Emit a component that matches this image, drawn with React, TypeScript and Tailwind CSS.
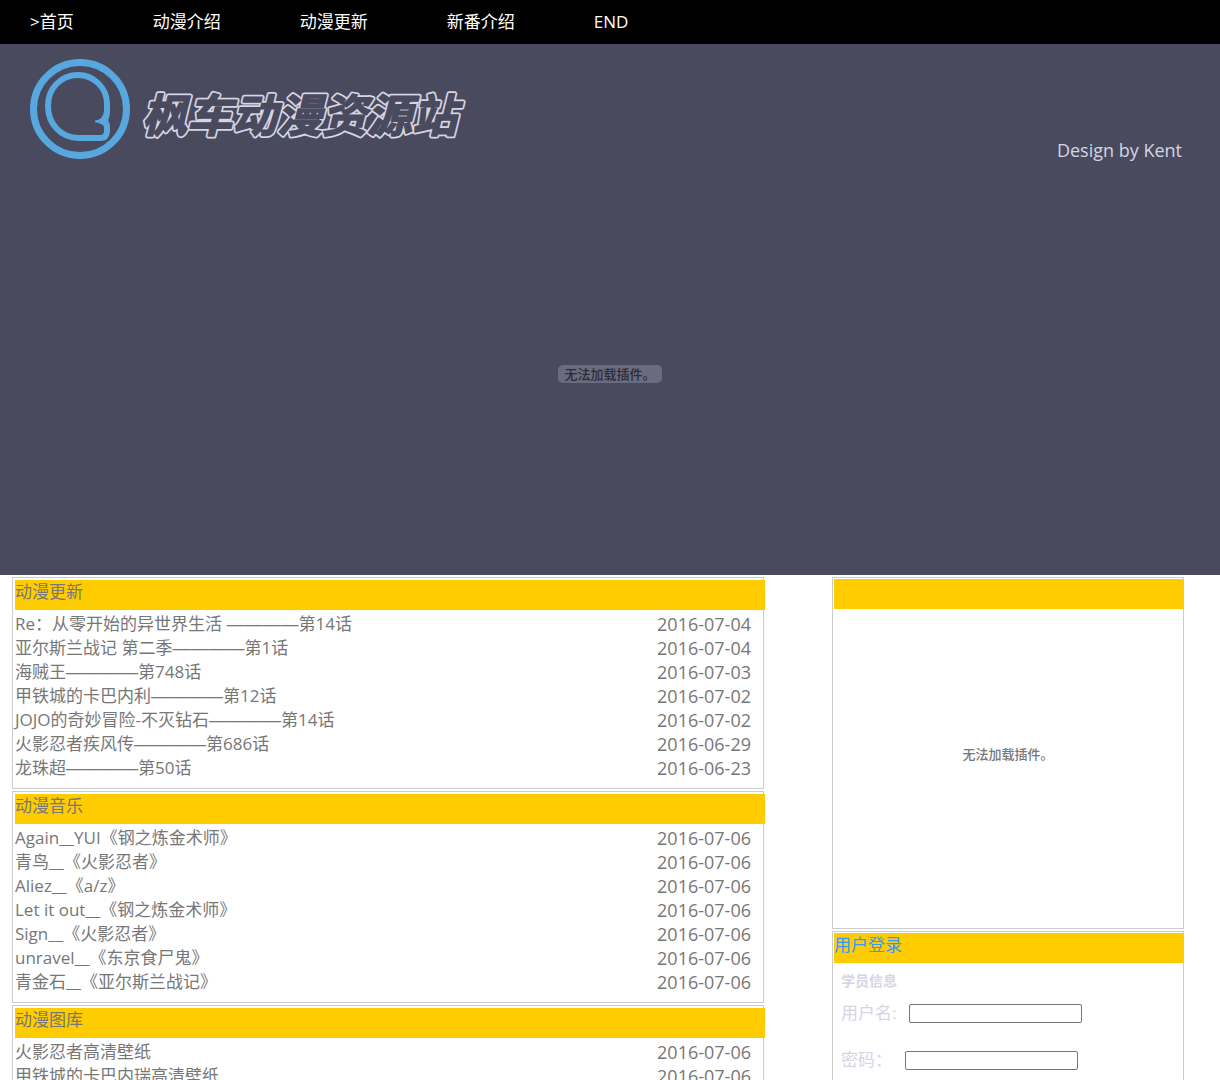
import React, { useState } from 'react';

interface Entry {
  title: string;
  episode?: string;
  date: string;
}

const navItems = ['>首页', '动漫介绍', '动漫更新', '新番介绍', 'END'];

const updates: Entry[] = [
  { title: 'Re：从零开始的异世界生活 ', episode: '第14话', date: '2016-07-04' },
  { title: '亚尔斯兰战记 第二季', episode: '第1话', date: '2016-07-04' },
  { title: '海贼王', episode: '第748话', date: '2016-07-03' },
  { title: '甲铁城的卡巴内利', episode: '第12话', date: '2016-07-02' },
  { title: 'JOJO的奇妙冒险-不灭钻石', episode: '第14话', date: '2016-07-02' },
  { title: '火影忍者疾风传', episode: '第686话', date: '2016-06-29' },
  { title: '龙珠超', episode: '第50话', date: '2016-06-23' },
];

const music: Entry[] = [
  { title: 'Again__YUI《钢之炼金术师》', date: '2016-07-06' },
  { title: '青鸟__《火影忍者》', date: '2016-07-06' },
  { title: 'Aliez__《a/z》', date: '2016-07-06' },
  { title: 'Let it out__《钢之炼金术师》', date: '2016-07-06' },
  { title: 'Sign__《火影忍者》', date: '2016-07-06' },
  { title: 'unravel__《东京食尸鬼》', date: '2016-07-06' },
  { title: '青金石__《亚尔斯兰战记》', date: '2016-07-06' },
];

const gallery: Entry[] = [
  { title: '火影忍者高清壁纸', date: '2016-07-06' },
  { title: '甲铁城的卡巴内瑞高清壁纸', date: '2016-07-06' },
];

const Logo: React.FC = () => (
  <svg viewBox="0 0 100 100" className="size-[100px] shrink-0" fill="none" stroke="#58a8e0" aria-hidden="true">
    <circle cx="50" cy="50" r="46.5" strokeWidth="7" />
    <path
      d="M77 53V45C77 29 64 16 48 16C31 16 18 29 18 47C18 65 31 79 49 79H70Q77 79 77 72V68"
      strokeWidth="6"
    />
    <path
      d="M80 52Q80 58 78 61Q80 64 80 69H74Q74 66 71 65Q69 64 65 63.2V61.6Q73 61 74 52Z"
      fill="#58a8e0"
      strokeWidth="0"
    />
  </svg>
);

// Outlined site name: a wide light stroke with the background colour laid over it
const SiteTitle: React.FC = () => (
  <svg viewBox="0 0 330 52" className="h-[52px] w-[330px]" strokeLinejoin="round">
    <defs>
      <text id="site-name" x="4" y="43" className="text-[45px] font-bold italic">
        枫车动漫资源站
      </text>
    </defs>
    <use href="#site-name" fill="#d5d5e3" stroke="#d5d5e3" strokeWidth="5" />
    <use href="#site-name" fill="#4a4a5f" stroke="#4a4a5f" strokeWidth="1.5" />
  </svg>
);

const ListPanel: React.FC<{ heading: string; entries: Entry[] }> = ({ heading, entries }) => (
  <section className="border border-[#cccccc] pt-0.5 pl-0.5 pb-2">
    <h2 className="-mr-0.5 mb-0.5 h-[30px] bg-[#ffcc00] leading-6">{heading}</h2>
    <ul>
      {entries.map((entry) => (
        <li key={entry.title} className="flex h-6 items-center justify-between pr-3">
          <a href="#" className="leading-6 whitespace-pre">
            {entry.title}
            {entry.episode && (
              <span className="font-['Liberation_Sans',sans-serif] text-lg leading-none">————</span>
            )}
            {entry.episode}
          </a>
          <span className="text-lg leading-6">{entry.date}</span>
        </li>
      ))}
    </ul>
  </section>
);

const LoginPanel: React.FC = () => {
  const [username, setUsername] = useState<string>('');
  const [password, setPassword] = useState<string>('');

  return (
    <section className="border border-[#cccccc] pt-px pb-8">
      <h2 className="-mr-px ml-px h-[30px] bg-[#ffcc00] leading-6 text-[#3399ff]">用户登录</h2>
      <form className="px-2 pt-2 text-[#d5d5e3]">
        <p className="text-sm leading-5 font-bold">学员信息</p>
        <div className="mt-2 flex items-center">
          <label htmlFor="username" className="mr-[13px] leading-7">用户名:</label>
          <input
            id="username"
            type="text"
            value={username}
            onChange={(event) => setUsername(event.target.value)}
            className="h-[19px] w-[173px] rounded-xs border border-[#767676] bg-white px-0.5 text-xs text-black"
          />
        </div>
        <div className="mt-[19px] flex items-center">
          <label htmlFor="password" className="mr-[13px] leading-7">密码：</label>
          <input
            id="password"
            type="password"
            value={password}
            onChange={(event) => setPassword(event.target.value)}
            className="h-[19px] w-[173px] rounded-xs border border-[#767676] bg-white px-0.5 text-xs text-black"
          />
        </div>
      </form>
    </section>
  );
};

const App: React.FC = () => {
  return (
    <div className="h-screen overflow-y-auto bg-white font-['Open_Sans','Noto_Sans_CJK_SC',sans-serif] text-[17px] text-[#777777] [scrollbar-width:none]" lang="zh-CN">
      <nav className="flex h-11 items-center gap-[79px] bg-black px-[30px] text-white">
        {navItems.map((item) => (
          <a key={item} href="#">{item}</a>
        ))}
      </nav>

      <header className="flex h-[531px] flex-col bg-[#4a4a5f] pt-[15px]">
        <div className="flex h-[105px] items-start justify-between pr-[38px] pl-[30px]">
          <div className="flex items-center gap-2">
            <Logo />
            <h1 className="mt-3">
              <SiteTitle />
            </h1>
          </div>
          <p className="mt-[79px] text-lg leading-6 text-[#d5d5e3]">Design by Kent</p>
        </div>
        <div className="mt-[201px] flex justify-center">
          <span className="rounded-[5px] bg-[#6b6b80] px-1.5 text-[13px] leading-[18px] font-medium text-[#2c2c36]">
            无法加载插件。
          </span>
        </div>
      </header>

      <main className="grid grid-cols-[minmax(0,1fr)_352px] items-start gap-x-[68px] pt-0.5 pr-9 pl-3">
        <div className="flex flex-col gap-0.5">
          <ListPanel heading="动漫更新" entries={updates} />
          <ListPanel heading="动漫音乐" entries={music} />
          <ListPanel heading="动漫图库" entries={gallery} />
        </div>
        <aside className="flex flex-col gap-0.5">
          <section className="flex h-[352px] flex-col border border-[#cccccc] pt-px">
            <div className="-mr-px ml-px h-[30px] shrink-0 bg-[#ffcc00]" />
            <p className="pt-[135px] text-center text-[13px] leading-5 font-medium">无法加载插件。</p>
          </section>
          <LoginPanel />
        </aside>
      </main>
    </div>
  );
};

export default App;
